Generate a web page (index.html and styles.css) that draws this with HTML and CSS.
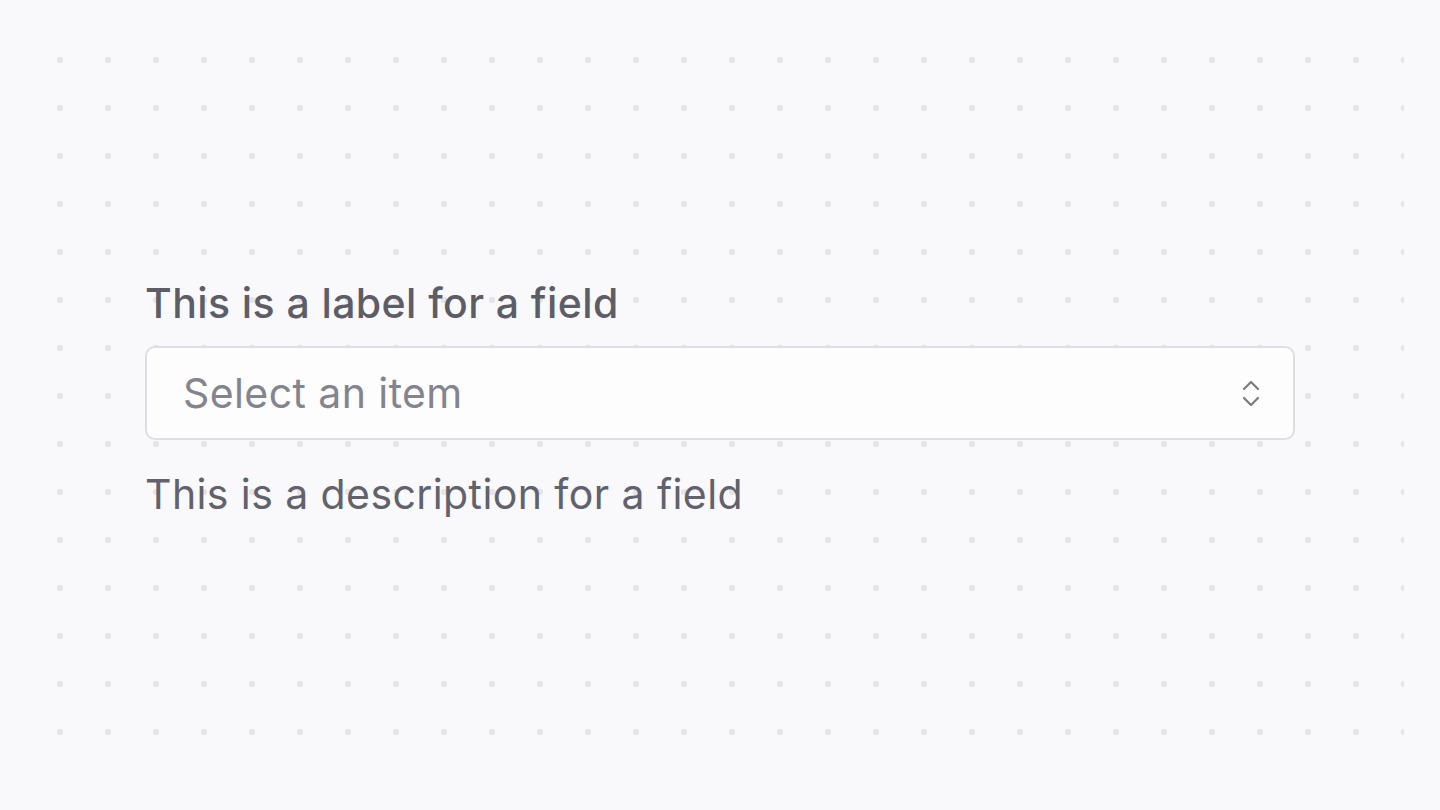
FILE: index.html
```html
<!DOCTYPE html>
<html lang="en">
<head>
<meta charset="utf-8">
<title>Select field</title>
<link rel="stylesheet" href="styles.css">
</head>
<body>
<div class="canvas">
  <div class="field">
    <label class="field-label" for="item">This is a label for a field</label>
    <div class="select" id="item" role="combobox" tabindex="0">
      <span class="select-value">Select an item</span>
      <svg class="select-icon" width="20" height="30" viewBox="0 0 20 30" aria-hidden="true">
        <path d="M3 11 L10 4 L17 11" fill="none" stroke="currentColor" stroke-width="2.2" stroke-linecap="round" stroke-linejoin="round"/>
        <path d="M3 20 L10 27 L17 20" fill="none" stroke="currentColor" stroke-width="2.2" stroke-linecap="round" stroke-linejoin="round"/>
      </svg>
    </div>
    <p class="field-description">This is a description for a field</p>
  </div>
</div>
</body>
</html>
```

FILE: styles.css
```css
html, body {
  margin: 0;
  padding: 0;
  height: 100%;
}
body {
  background: #f9f9fb;
  font-family: Inter, "Noto Sans", sans-serif;
  padding: 36px;
  box-sizing: border-box;
}
.canvas {
  height: 100%;
  background-color: #f9f9fb;
  background-image: radial-gradient(circle at center, #e4e4e9 0, #e4e4e9 3px, transparent 3.5px);
  background-size: 48px 48px;
  background-position: 0 0;
  display: flex;
  align-items: center;
  justify-content: center;
}
.field {
  width: 1150px;
  display: flex;
  flex-direction: column;
  padding-bottom: 13px;
}
.field-label {
  font-size: 41px;
  font-weight: 500;
  letter-spacing: 0.01em;
  line-height: 54px;
  color: #5d5d67;
  margin-bottom: 16px;
}
.select {
  height: 94px;
  box-sizing: border-box;
  border: 2px solid #dedee5;
  border-radius: 10px;
  background: #fdfdfe;
  display: flex;
  align-items: center;
  justify-content: space-between;
  padding: 0 32px 0 36px;
}
.select-value {
  font-size: 41px;
  letter-spacing: 0.01em;
  color: #84848e;
}
.select-icon {
  color: #7a7a84;
  display: block;
}
.field-description {
  margin: 27px 0 0;
  font-size: 41px;
  letter-spacing: 0.01em;
  line-height: 54px;
  color: #62626c;
}
```
